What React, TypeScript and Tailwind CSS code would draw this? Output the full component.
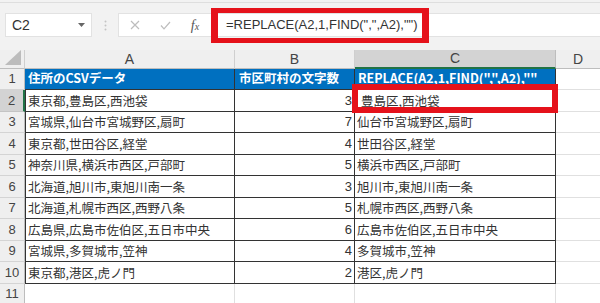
import React from "react";

const dataA = [
  "東京都,豊島区,西池袋",
  "宮城県,仙台市宮城野区,扇町",
  "東京都,世田谷区,経堂",
  "神奈川県,横浜市西区,戸部町",
  "北海道,旭川市,東旭川南一条",
  "北海道,札幌市西区,西野八条",
  "広島県,広島市佐伯区,五日市中央",
  "宮城県,多賀城市,笠神",
  "東京都,港区,虎ノ門",
];
const dataB = [3, 7, 4, 5, 3, 5, 6, 4, 2];
const dataC = [
  "豊島区,西池袋",
  "仙台市宮城野区,扇町",
  "世田谷区,経堂",
  "横浜市西区,戸部町",
  "旭川市,東旭川南一条",
  "札幌市西区,西野八条",
  "広島市佐伯区,五日市中央",
  "多賀城市,笠神",
  "港区,虎ノ門",
];

const rowHeader =
  "flex items-center justify-center bg-[#efefef] border-r border-b border-r-[#bdbdbd] border-b-[#d4d4d4] text-[13px] text-[#444] font-['Liberation_Sans',sans-serif]";

export default function App() {
  return (
    <div className="relative w-[600px] h-[303px] overflow-hidden bg-[#f2f2f2] font-['Noto_Sans_CJK_JP',sans-serif]">
      {/* formula bar */}
      <div className="h-[48px] border-t border-t-[#dedede] mt-[2px] flex items-start pt-[10px]">
        <div className="ml-[5px] w-[87px] h-[24px] bg-white border border-[#e2e2e2] flex items-center pl-[6px] pr-[6px]">
          <span className="text-[14px] text-[#333] font-['Liberation_Sans',sans-serif]">C2</span>
          <svg className="ml-auto" width="7" height="4" viewBox="0 0 7 4">
            <path d="M0 0 L7 0 L3.5 4 Z" fill="#666" />
          </svg>
        </div>
        <div className="w-[26px] h-[24px] flex items-center justify-center">
          <svg width="3" height="11" viewBox="0 0 3 11">
            <circle cx="1.5" cy="1.5" r="1" fill="#c4c4c4" />
            <circle cx="1.5" cy="5.5" r="1" fill="#c4c4c4" />
            <circle cx="1.5" cy="9.5" r="1" fill="#c4c4c4" />
          </svg>
        </div>
        <div className="flex-1 h-[24px] bg-white border-l border-y border-[#e2e2e2] flex items-center">
          <div className="w-[30px] flex justify-center ml-[1px]">
            <svg width="10" height="10" viewBox="0 0 10 10">
              <path d="M1 1 L9 9 M9 1 L1 9" stroke="#bdbdbd" strokeWidth="1.2" />
            </svg>
          </div>
          <div className="w-[30px] flex justify-center">
            <svg width="11" height="9" viewBox="0 0 11 9">
              <path d="M1 4.5 L4 7.8 L10 1" stroke="#bdbdbd" strokeWidth="1.2" fill="none" />
            </svg>
          </div>
          <div className="w-[30px] flex justify-center">
            <span className="font-['Liberation_Serif',serif] italic text-[14px] text-[#555]">
              f<span className="text-[10px]">x</span>
            </span>
          </div>
          <span className="ml-[16px] text-[13px] text-[#333] font-['Liberation_Sans',sans-serif] whitespace-pre">
            =REPLACE(A2,1,FIND(",",A2),"")
          </span>
        </div>
      </div>

      {/* sheet grid */}
      <div className="grid grid-cols-[25px_210px_120px_201px_44px] grid-rows-[19px_21px_22px_21px_22px_21px_22px_21px_22px_21px_22px_21px]">
        {/* column headers */}
        <div className="bg-[#efefef] border-r border-b border-r-[#cfcfcf] border-b-[#bdbdbd] relative">
          <svg className="absolute right-[3px] bottom-[3px]" width="16" height="15" viewBox="0 0 16 15">
            <path d="M16 0 L16 15 L0 15 Z" fill="#bcbcbc" />
          </svg>
        </div>
        {["A", "B"].map((c) => (
          <div
            key={c}
            className="flex items-center justify-center bg-[#efefef] border-r border-b border-r-[#cfcfcf] border-b-[#bdbdbd] text-[14px] text-[#444] font-['Liberation_Sans',sans-serif]"
          >
            {c}
          </div>
        ))}
        <div className="flex items-center justify-center bg-[#d3d3d3] border-r border-b-2 border-r-[#bdbdbd] border-b-[#217346] text-[14px] text-[#444] font-['Liberation_Sans',sans-serif]">
          C
        </div>
        <div className="flex items-center justify-center bg-[#efefef] border-b border-b-[#bdbdbd] text-[14px] text-[#444] font-['Liberation_Sans',sans-serif]">
          D
        </div>

        {/* row 1 */}
        <div className={rowHeader}>1</div>
        <div className="flex items-center pl-[3px] pb-[2px] leading-[16px] bg-[#0070c0] border-r border-b border-[#333] text-white font-bold text-[12.5px] whitespace-nowrap overflow-hidden">
          住所のCSVデータ
        </div>
        <div className="flex items-center pl-[4px] pb-[2px] leading-[16px] bg-[#0070c0] border-r border-b border-[#333] text-white font-bold text-[12.5px] whitespace-nowrap overflow-hidden">
          市区町村の文字数
        </div>
        <div className="flex items-center pl-[3px] pb-[3px] leading-[16px] bg-[#0070c0] border-r border-b border-[#333] text-white font-bold text-[12.5px] whitespace-nowrap overflow-hidden">
          REPLACE(A2,1,FIND(",",A2),""
        </div>
        <div className="bg-white border-b border-b-[#e0e0e0]" />

        {dataA.map((a, i) => {
          const sel = i === 0;
          return (
            <React.Fragment key={i}>
              <div
                className={
                  sel
                    ? "flex items-center justify-center bg-[#d3d3d3] border-r-2 border-b border-r-[#217346] border-b-[#c4c4c4] text-[13px] text-[#444] font-['Liberation_Sans',sans-serif]"
                    : rowHeader
                }
              >
                {i + 2}
              </div>
              <div className="flex items-center pl-[2px] leading-[18px] bg-white border-l border-r border-b border-[#333] text-[12.5px] text-[#333] whitespace-nowrap overflow-hidden">
                {a}
              </div>
              <div className="flex items-center justify-end pr-[2px] bg-white border-r border-b border-[#333] text-[13px] text-[#333] font-['Liberation_Sans',sans-serif]">
                {dataB[i]}
              </div>
              <div
                className={
                  sel
                    ? "flex items-center pl-[6px] leading-[18px] bg-white border-r border-b border-[#333] text-[12.5px] text-[#333] whitespace-nowrap overflow-hidden"
                    : "flex items-center pl-[2px] leading-[18px] bg-white border-r border-b border-[#333] text-[12.5px] text-[#333] whitespace-nowrap overflow-hidden"
                }
              >
                {dataC[i]}
              </div>
              <div className="bg-white border-b border-b-[#e0e0e0]" />
            </React.Fragment>
          );
        })}

        {/* row 11 */}
        <div className={rowHeader}>11</div>
        <div className="bg-white border-r border-b border-[#e0e0e0]" />
        <div className="bg-white border-r border-b border-[#e0e0e0]" />
        <div className="bg-white border-r border-b border-[#e0e0e0]" />
        <div className="bg-white border-b border-b-[#e0e0e0]" />
      </div>

      {/* red highlight overlays */}
      <div className="absolute left-[211px] top-[8px] w-[218px] h-[35px] border-x-[7px] border-y-[5px] border-[#e5121b]" />
      <div className="absolute left-[352px] top-[84px] w-[206px] h-[29px] border-[6px] border-[#e5121b]" />
    </div>
  );
}
